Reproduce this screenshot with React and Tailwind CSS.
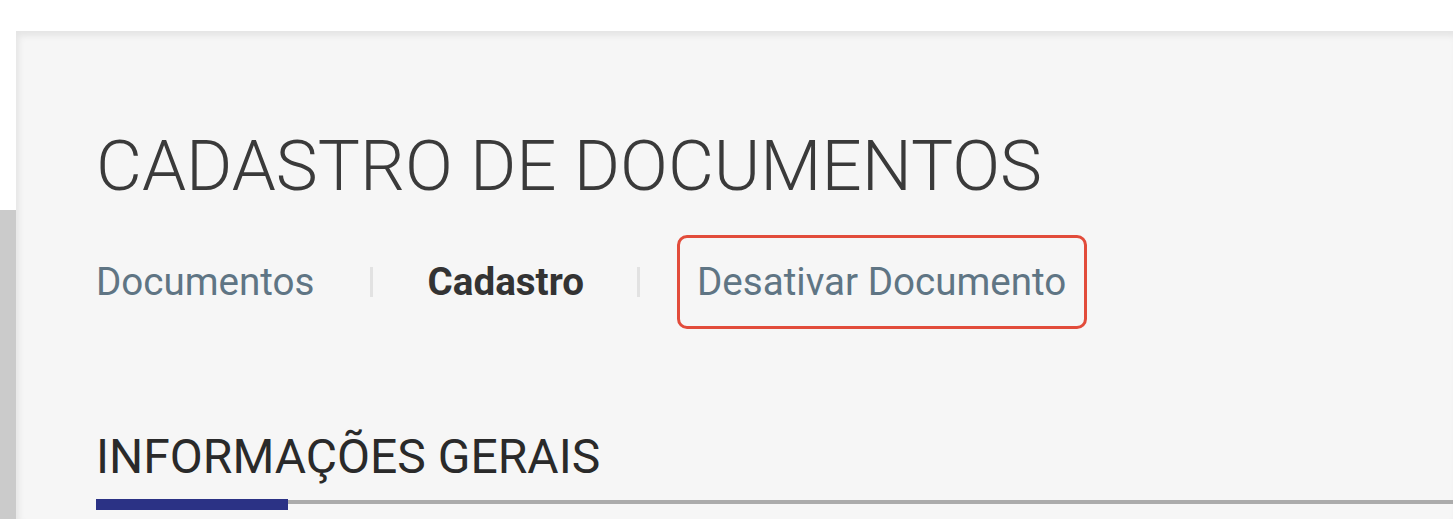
export default function App() {
  return (
    <div className="w-[1453px] h-[519px] bg-white flex flex-col overflow-hidden" style={{ fontFamily: "Roboto, 'Liberation Sans', sans-serif" }}>
      <div className="h-[31px] bg-white shrink-0" />
      <div className="flex flex-1 min-h-0">
        <div className="w-[16px] flex flex-col shrink-0">
          <div className="h-[179px] bg-white" />
          <div className="flex-1 bg-[#cbcbcb]" />
        </div>
        <div className="flex-1 bg-[#f6f6f6] shadow-[inset_3px_5px_6px_rgba(0,0,0,0.07)] pl-[80px] pt-[95px] flex flex-col">
          <h1 className="text-[70.7px] leading-[80px] font-light text-[#3a3a3a]">CADASTRO DE DOCUMENTOS</h1>
          <div className="flex items-center mt-[29px] h-[94px] text-[38.6px]">
            <span className="text-[#5f7584]">Documentos</span>
            <span className="w-[3px] h-[30px] bg-[#e2e2e2] ml-[55px] mr-[55px]" />
            <span className="font-bold text-[#333333]">Cadastro</span>
            <span className="w-[3px] h-[30px] bg-[#e2e2e2] ml-[53px] mr-[37px]" />
            <span className="border-[3px] border-[#e24c3b] rounded-[10px] h-[94px] pl-[17px] pr-[18px] flex items-center text-[#5f7584]">Desativar Documento</span>
          </div>
          <h2 className="mt-[100px] text-[48px] leading-[56px] text-[#2a2a2a]">INFORMAÇÕES GERAIS</h2>
          <div className="relative mt-[14px] h-[11px]">
            <div className="absolute left-0 right-0 top-[1px] h-[4px] bg-[#ababab]" />
            <div className="absolute left-0 top-0 w-[192px] h-[11px] bg-[#2b3285]" />
          </div>
        </div>
      </div>
    </div>
  );
}
